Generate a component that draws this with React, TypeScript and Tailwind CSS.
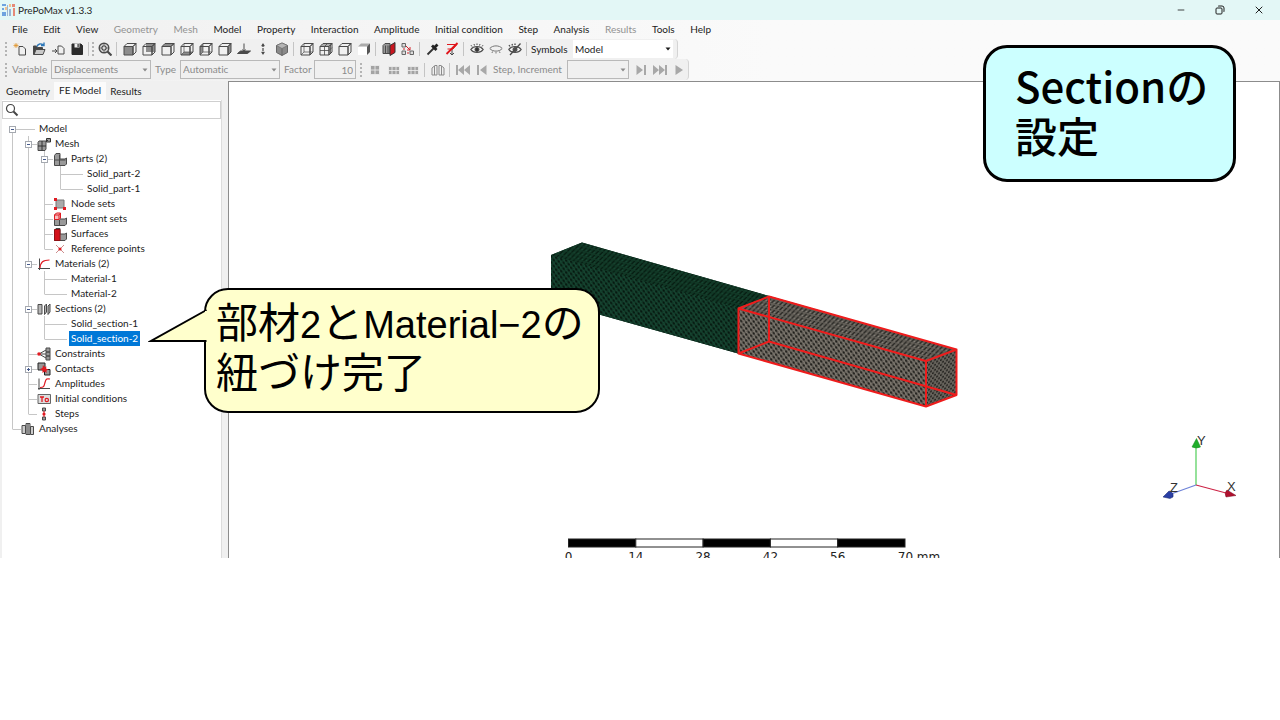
import React from 'react';
import { Minus, X } from 'lucide-react';

const menuItems = [
  { label: 'File' },
  { label: 'Edit' },
  { label: 'View' },
  { label: 'Geometry', disabled: true },
  { label: 'Mesh', disabled: true },
  { label: 'Model' },
  { label: 'Property' },
  { label: 'Interaction' },
  { label: 'Amplitude' },
  { label: 'Initial condition' },
  { label: 'Step' },
  { label: 'Analysis' },
  { label: 'Results', disabled: true },
  { label: 'Tools' },
  { label: 'Help' },
];

interface IconProps {
  children: React.ReactNode;
}

const Icon = ({ children }: IconProps) => (
  <svg
    viewBox="0 0 14 14"
    className="h-3.5 w-3.5 shrink-0"
    fill="none"
    stroke="#4a4a4a"
    strokeWidth="1"
    aria-hidden="true"
  >
    {children}
  </svg>
);

const FRONT = 'M1 4.5h9v8.5h-9z';
const BACK = 'M4 1.5h9v8.5h-9z';
const TOP = 'M1 4.5l3-3h9l-3 3z';
const BOTTOM = 'M1 13l3-3h9l-3 3z';
const LEFT = 'M1 4.5l3-3v8.5l-3 3z';
const RIGHT = 'M10 4.5l3-3v8.5l-3 3z';

const CubeIcon = ({ face, inner }: { face?: string; inner?: boolean }) => (
  <Icon>
    {face && <path d={face} fill="#8c8c8c" stroke="none" />}
    <path d={FRONT} />
    <path d={TOP} />
    <path d={RIGHT} />
    {inner && <path d="M4 1.5v8.5h9M4 10l-3 3" strokeWidth="0.7" />}
  </Icon>
);

const toolbarGroups: { name: string; icon: React.ReactNode }[][] = [
  [
    {
      name: 'Zoom to fit',
      icon: (
        <Icon>
          <circle cx="6" cy="6" r="4.8" fill="#d8d8d8" strokeWidth="1.4" />
          <path d="M9.5 9.5l4 4" strokeWidth="2.2" />
          <path
            d="M6 2.500v2M6 7.500v2M2.500 6h2M7.500 6h2M4 4l1 1M8 4L7 5M4 8l1-1M8 8L7 7"
            strokeWidth="1.300"
          />
        </Icon>
      ),
    },
  ],
  [
    { name: 'Front view', icon: <CubeIcon face={FRONT} /> },
    { name: 'Back view', icon: <CubeIcon face={BACK} /> },
    { name: 'Top view', icon: <CubeIcon face={TOP} /> },
    { name: 'Bottom view', icon: <CubeIcon face={BOTTOM} inner /> },
    { name: 'Left view', icon: <CubeIcon face={LEFT} inner /> },
    { name: 'Right view', icon: <CubeIcon face={RIGHT} /> },
    {
      name: 'Normal view',
      icon: (
        <Icon>
          <path d="M0.500 11.500l3-2.500h10l-3 2.500z" fill="#4a4a4a" />
          <path d="M7 1.500v8M5.500 7.500L7 9.500l1.500-2" />
        </Icon>
      ),
    },
    {
      name: 'Vertical view',
      icon: (
        <Icon>
          <path d="M7 2v10" strokeWidth="1.200" strokeDasharray="3 1" />
          <path d="M5.500 4L7 1.500 8.500 4zM5.500 10L7 12.500 8.500 10z" fill="#4a4a4a" strokeWidth="0.500" />
        </Icon>
      ),
    },
    {
      name: 'Isometric view',
      icon: (
        <Icon>
          <path d="M7 1l5.500 2.500v7L7 13.500l-5.500-3v-7z" fill="#8a8a8a" stroke="#666" />
          <path d="M1.500 3.500L7 1l5.500 2.500L7 6.500z" fill="#b5b5b5" stroke="#666" strokeWidth="0.600" />
          <path d="M7 6.500v7" stroke="#666" />
        </Icon>
      ),
    },
  ],
  [
    { name: 'Wireframe', icon: <CubeIcon inner /> },
    {
      name: 'Element edges',
      icon: (
        <Icon>
          <path d={FRONT} />
          <path d={TOP} />
          <path d={RIGHT} />
          <path d="M5.500 4.500V13M1 8.500h9M5.500 4.500l3-3M10 8.500l3-3M2.500 3h9M11.500 3v8.500" strokeWidth="0.800" />
        </Icon>
      ),
    },
    { name: 'Model edges', icon: <CubeIcon /> },
    {
      name: 'No edges',
      icon: (
        <Icon>
          <path d={FRONT} fill="#fff" stroke="none" />
          <path d={TOP} fill="#aaa" stroke="none" />
          <path d={RIGHT} fill="#555" stroke="none" />
        </Icon>
      ),
    },
  ],
  [
    {
      name: 'Section view',
      icon: (
        <Icon>
          <path d="M1 3.500l2-2h5v10H1z" fill="#999" />
          <path d="M3.500 3.500v8M6 3.500v8" />
          <path d="M8 3.500l5-3v10l-5 3z" fill="#c9151e" stroke="#333" />
        </Icon>
      ),
    },
    {
      name: 'Exploded view',
      icon: (
        <Icon>
          <path d="M1 1.500h3.500v3.500H1zM1 9h3.500v3.500H1zM9 9h3.500v3.500H9z" fill="#ddd" stroke="#666" />
          <path d="M5 4l4 4M3 6v2M6 11h2M9 5v3H6" stroke="#d0222a" />
        </Icon>
      ),
    },
  ],
  [
    {
      name: 'Query',
      icon: (
        <Icon>
          <path d="M1.500 12.500l6.500-6.500" strokeWidth="1.800" stroke="#333" />
          <path d="M6 3.500L10.500 8M8.500 5.500l3-3" strokeWidth="2.800" stroke="#222" />
        </Icon>
      ),
    },
    {
      name: 'Remove annotations',
      icon: (
        <Icon>
          <path d="M7 7v6M5 11l2 2 2-2" />
          <path d="M2 2.500h10L8 7H2.500" stroke="#e0161c" />
          <path d="M1.500 12L12.500 1" stroke="#e0161c" strokeWidth="1.800" />
        </Icon>
      ),
    },
  ],
  [
    {
      name: 'Show',
      icon: (
        <Icon>
          <path d="M0.800 7.500C3.500 3.500 10.500 3.500 13.200 7.500 10.500 11.500 3.500 11.500 0.800 7.500z" strokeWidth="1.200" />
          <circle cx="7" cy="7.500" r="2" fill="#333" />
          <path d="M2 4.500L1 3.200M4.500 3.500L4 2M7 3V1.500M9.500 3.500l.5-1.500M12 4.500l1-1.300" />
        </Icon>
      ),
    },
    {
      name: 'Hide',
      icon: (
        <Icon>
          <path
            d="M0.800 6.500C3.500 3 10.500 3 13.200 6.500 10.500 10 3.500 10 0.800 6.500zM3.500 9.500L3 11M7 10v1.500M10.500 9.500l.5 1.500"
            stroke="#777"
          />
        </Icon>
      ),
    },
    {
      name: 'Invert visibility',
      icon: (
        <Icon>
          <path d="M0.800 7.500C3.500 3.500 10.500 3.500 13.200 7.500 10.500 11.500 3.500 11.500 0.800 7.500z" strokeWidth="1.200" />
          <circle cx="7" cy="7.500" r="2" fill="#555" />
          <path d="M2 13L12.500 1.500M2 4.500L1 3M4.500 3.500L4 2M7 3V1.500" strokeWidth="1.300" />
        </Icon>
      ),
    },
  ],
];

const fileButtons = [
  {
    name: 'New',
    icon: (
      <Icon>
        <path d="M6 4.500h4l2.500 2.500v6H6z" />
        <path d="M3 1v5M.5 3.500h5M1.200 1.700l3.600 3.600M4.800 1.700L1.200 5.300" stroke="#e0962e" strokeWidth="0.800" />
      </Icon>
    ),
  },
  {
    name: 'Open',
    icon: (
      <Icon>
        <path d="M1.500 12.500V4h3l1 1.500h5v7z" fill="#444" />
        <path d="M2 12.500l2-5h9l-2 5z" fill="#c9c9c9" />
        <path d="M5 4.500C6 1.500 9 1.200 11.500 3M12 .5v3H9" stroke="#2d77b8" strokeWidth="1.400" />
      </Icon>
    ),
  },
  {
    name: 'Import',
    icon: (
      <Icon>
        <path d="M7 4h3.500L13 6.500V12H7zM1 9h5M4 7l2 2-2 2" />
      </Icon>
    ),
  },
  {
    name: 'Save',
    icon: (
      <Icon>
        <path d="M2 2h9l1.500 1.500v9H2z" fill="#2b2b2b" stroke="#2b2b2b" />
        <path d="M4.500 1.500h5v4h-5z" fill="#f0f0f0" stroke="none" />
        <path d="M7.500 2h1.200v3H7.500z" fill="#2b2b2b" stroke="none" />
      </Icon>
    ),
  },
];

const ToolButton = ({ name, children }: { name: string; children: React.ReactNode }) => (
  <button type="button" aria-label={name} className="flex h-5 w-[19px] shrink-0 items-center justify-center">
    {children}
  </button>
);

const Separator = () => <span className="ml-0.5 mr-[3px] h-3.5 w-px shrink-0 bg-[#c4c4c4]" />;

const Grip = () => <span className="h-3.5 w-0 shrink-0 border-l-2 border-dotted border-[#b4b4b4]" />;

const TitleBar = () => (
  <header className="flex h-5 items-center bg-[#e3f7f6] pl-0.5 text-[#1f1f1f]">
    <svg viewBox="0 0 14 14" className="mr-0.5 h-3.5 w-3.5" aria-hidden="true">
      <path d="M0 1h4v2H0zM0 5h2v2H0zM0 9h4v4H0z" fill="#6fa3df" />
      <path d="M5 2h1v11H5zM7 6h2v7H7z" fill="#9ab4d4" />
      <path d="M10 1h3v3h-3zM11 5h2v8h-2z" fill="#e58a78" />
      <path d="M7 1h2v3H7zM3 4h2v3H3z" fill="#f1c08f" />
    </svg>
    <h1 className="flex-1">PrePoMax v1.3.3</h1>
    <div className="flex items-center pr-0.5">
      <button type="button" aria-label="Minimize" className="flex w-[39px] justify-center">
        <Minus className="h-2.5 w-2.5" />
      </button>
      <button type="button" aria-label="Restore" className="flex w-[39px] justify-center">
        <svg viewBox="0 0 10 10" className="h-2.5 w-2.5" fill="none" stroke="#1f1f1f" aria-hidden="true">
          <rect x="1" y="3" width="6" height="6" rx="1" />
          <path d="M3 1.500q.3-.5 1-.5h3q2 0 2 2v3q0 .7-.5 1" />
        </svg>
      </button>
      <button type="button" aria-label="Close" className="flex w-[39px] justify-center">
        <X className="h-3 w-3" strokeWidth={2} />
      </button>
    </div>
  </header>
);

const MenuBar = () => (
  <nav className="flex h-[19px] w-[711px] items-center justify-between pl-3">
    {menuItems.map((item) => (
      <button
        key={item.label}
        type="button"
        disabled={item.disabled}
        className="whitespace-nowrap text-[#1c1c1c] disabled:text-[#929292]"
      >
        {item.label}
      </button>
    ))}
  </nav>
);

const Arrow = () => (
  <svg viewBox="0 0 6 4" className="pointer-events-none -ml-2 h-1 w-1.5 shrink-0" aria-hidden="true">
    <path d="M0.500 0.500h5L3 3.500z" fill="currentColor" />
  </svg>
);

const MainToolbar = () => (
  <div className="flex h-5 w-max items-center rounded-r border-r border-[#d4d4d4] bg-[#f0f0f0] pl-[5px] pr-1">
    <Grip />
    <div className="ml-[3px] flex">
      {fileButtons.map((b) => (
        <ToolButton key={b.name} name={b.name}>
          {b.icon}
        </ToolButton>
      ))}
    </div>
    <Separator />
    <Grip />
    <span className="w-px" />
    {toolbarGroups.map((group, i) => (
      <React.Fragment key={i}>
        {i > 0 && <Separator />}
        {group.map((b) => (
          <ToolButton key={b.name} name={b.name}>
            {b.icon}
          </ToolButton>
        ))}
      </React.Fragment>
    ))}
    <Separator />
    <label htmlFor="symbols" className="ml-px w-[42px]">
      Symbols
    </label>
    <div className="flex w-[100px] items-center bg-white">
      <select id="symbols" className="h-[18px] w-full appearance-none pl-0.5">
        <option>Model</option>
      </select>
      <Arrow />
    </div>
  </div>
);

const resultButtons = [
  { name: 'Undeformed', d: 'M2.500 2.500h9v9h-9zM7 2.500v9M2.500 7h9' },
  { name: 'Deformed', d: 'M1.500 3.500h11v8h-11zM5 4v7.500M9 4v7.500M1.500 7.500h11' },
  { name: 'Color contours', d: 'M1.500 3.500h11v8h-11zM5 4v7.500M9 4v7.500M1.500 7.500h11' },
];

const ResultsToolbar = () => (
  <div className="flex h-[21px] w-max items-center rounded-r border-r border-[#d4d4d4] bg-[#f0f0f0] pl-[5px] text-[#8b8b8b]">
    <Grip />
    <label htmlFor="variable" className="ml-[5px] w-[39px]">
      Variable
    </label>
    <div className="flex w-[100px] items-center border border-[#b9b9b9]">
      <select id="variable" disabled className="h-[17px] w-full appearance-none pl-0.5">
        <option>Displacements</option>
      </select>
      <Arrow />
    </div>
    <label htmlFor="type" className="ml-1 w-[25px]">
      Type
    </label>
    <div className="flex w-[100px] items-center border border-[#b9b9b9]">
      <select id="type" disabled className="h-[17px] w-full appearance-none pl-0.5">
        <option>Automatic</option>
      </select>
      <Arrow />
    </div>
    <label htmlFor="factor" className="ml-1 w-[30px]">
      Factor
    </label>
    <input
      id="factor"
      disabled
      defaultValue="10"
      className="mr-1 h-[19px] w-[42px] border border-[#b9b9b9] pr-0.5 text-right"
    />
    <Grip />
    <div className="ml-[3px] flex">
      {resultButtons.map((b) => (
        <ToolButton key={b.name} name={b.name}>
          <Icon>
            <path d={b.d} stroke="#f0f0f0" fill="#a3a3a3" strokeWidth="0.800" />
          </Icon>
        </ToolButton>
      ))}
    </div>
    <Separator />
    <ToolButton name="Transformation">
      <Icon>
        <path d="M1 5l3-2.500h2V12H1zM13 5l-3-2.500H8V12h5zM3.500 3v9M10.500 3v9" stroke="#8b8b8b" />
      </Icon>
    </ToolButton>
    <Separator />
    <ToolButton name="First increment">
      <Icon>
        <path d="M0 2h2v10H0zM8 2v10L2 7zM14 2v10L8 7z" fill="#a8a8a8" stroke="none" />
      </Icon>
    </ToolButton>
    <ToolButton name="Previous increment">
      <Icon>
        <path d="M2 2h2v10H2zM11.500 2v10L5 7z" fill="#a8a8a8" stroke="none" />
      </Icon>
    </ToolButton>
    <label htmlFor="step" className="ml-0.5 w-[74px] whitespace-nowrap">
      Step, Increment
    </label>
    <div className="mr-0.5 flex w-[62px] items-center border border-[#b9b9b9]">
      <select id="step" disabled className="h-[17px] w-full appearance-none">
        <option></option>
      </select>
      <Arrow />
    </div>
    <ToolButton name="Next increment">
      <Icon>
        <path d="M10 2h2v10h-2zM2.500 2v10L9 7z" fill="#a8a8a8" stroke="none" />
      </Icon>
    </ToolButton>
    <ToolButton name="Last increment">
      <Icon>
        <path d="M12 2h2v10h-2zM0 2v10l6-5zM6 2v10l6-5z" fill="#a8a8a8" stroke="none" />
      </Icon>
    </ToolButton>
    <ToolButton name="Animate">
      <Icon>
        <path d="M3.500 2v10L11 7z" fill="#a8a8a8" stroke="none" />
      </Icon>
    </ToolButton>
  </div>
);

const BLOCKS = 'M1.500 3.500l1.500-2h4v5.500h5l1.500-1v6l-1.500 1.500h-10.500z';

const treeIcons: Record<string, React.ReactNode> = {
  mesh: (
    <Icon>
      <path d="M1 5.500l1-1.500h7v8l-1 1.500H1z" fill="#999" />
      <path d="M1 9h8M5 4v9.500M9 4l1-1 1 1M9.500 1.500h4v3.500h-4z" fill="#999" stroke="#333" />
    </Icon>
  ),
  parts: (
    <Icon>
      <path d={BLOCKS} fill="#999" />
      <path d="M1.500 8h11M6.500 3v10.500" />
    </Icon>
  ),
  nodes: (
    <Icon>
      <path d="M3 3h8v8H3z" fill="#aaa" stroke="#777" />
      <path d="M1 1h3v3H1zM10 10h3v3h-3zM1 10h3v3H1z" fill="#e01b22" stroke="none" />
    </Icon>
  ),
  elements: (
    <Icon>
      <path d={BLOCKS} fill="#999" />
      <path d="M1.500 3l2-2h4v5l-1.500 1.500H1.500zM1.500 3H6v4.500M6 3l1.500-2" fill="#f6bcbc" stroke="#e01b22" />
      <path d="M6.500 8v5.500" />
    </Icon>
  ),
  surfaces: (
    <Icon>
      <path d={BLOCKS} fill="#999" />
      <path d="M1.500 2.500H7v11H1.500z" fill="#d3121a" stroke="#8f1014" />
    </Icon>
  ),
  points: (
    <Icon>
      <path d="M3 3l8 8M11 3l-8 8" stroke="#c07070" strokeWidth="0.800" />
      <circle cx="7" cy="7" r="1.600" fill="#e01b22" stroke="none" />
    </Icon>
  ),
  materials: (
    <Icon>
      <path d="M2.500 1.500V13M1 11.500h12" />
      <path d="M3 11c.5-6 3-8 9.500-8" stroke="#e01b22" strokeWidth="1.200" />
    </Icon>
  ),
  sections: (
    <Icon>
      <path d="M1 2.500h4V12H1zM7.500 4L9.500 2v8l-2 2.500zM11 4l2-2v8l-2 2.500z" fill="#b5b5b5" />
    </Icon>
  ),
  constraints: (
    <Icon>
      <path d="M9 1h4v4H9zM9 5h4v4H9zM9 9h4v4H9z" fill="#999" />
      <path d="M2 7l7-4M2 7h7M2 7l7 4" stroke="#444" />
      <circle cx="2" cy="7" r="1.800" fill="#e01b22" stroke="none" />
    </Icon>
  ),
  contacts: (
    <Icon>
      <path d="M1 1h7v7H1zM7.500 7.500H13V13H7.500z" fill="#999" stroke="#222" />
      <path d="M6 3l1.500 2 2-.5-.5 2 2.500 1-2.200 1.200.5 2.300-2.300-1.500L5.500 11V8.500L3 7l2.500-1z" fill="#e01b22" stroke="none" />
    </Icon>
  ),
  amplitudes: (
    <Icon>
      <path d="M2 1.500V13M1 11.500h12" />
      <path d="M3 10.500c4 0 4-1 5-5s2-4 5-3.500" stroke="#e01b22" strokeWidth="1.200" />
    </Icon>
  ),
  initial: (
    <Icon>
      <path d="M1 2.500h12.500v9H1z" fill="#ddd" stroke="#666" />
      <path d="M3 5h4M5 5v5" stroke="#e01b22" strokeWidth="1.300" />
      <circle cx="9.800" cy="8" r="1.700" stroke="#e01b22" strokeWidth="1.200" />
    </Icon>
  ),
  steps: (
    <Icon>
      <path d="M5.500 1h3v3h-3zM5.500 10h3v3h-3z" fill="#999" />
      <path d="M7 4v6" stroke="#e01b22" />
      <circle cx="7" cy="7" r="1.600" fill="#e01b22" stroke="none" />
    </Icon>
  ),
  analyses: (
    <Icon>
      <path d="M1 3.500h3.500v8H1zM5 1.500h4v11H5zM9.500 4.500h3v8h-3z" fill="#ccc" />
      <path d="M7 1.500v11" />
    </Icon>
  ),
};

// guides: one letter per indent column
// v = line, t = tee, l = last child, r = root, m = open node, p = closed node
const treeRows: { guides: string; label: string; icon?: string; selected?: boolean }[] = [
  { guides: 'r', label: 'Model' },
  { guides: 'vm', label: 'Mesh', icon: 'mesh' },
  { guides: 'vvm', label: 'Parts (2)', icon: 'parts' },
  { guides: 'vvvt', label: 'Solid_part-2' },
  { guides: 'vvvl', label: 'Solid_part-1' },
  { guides: 'vvt', label: 'Node sets', icon: 'nodes' },
  { guides: 'vvt', label: 'Element sets', icon: 'elements' },
  { guides: 'vvt', label: 'Surfaces', icon: 'surfaces' },
  { guides: 'vvl', label: 'Reference points', icon: 'points' },
  { guides: 'vm', label: 'Materials (2)', icon: 'materials' },
  { guides: 'vvt', label: 'Material-1' },
  { guides: 'vvl', label: 'Material-2' },
  { guides: 'vm', label: 'Sections (2)', icon: 'sections' },
  { guides: 'vvt', label: 'Solid_section-1' },
  { guides: 'vvl', label: 'Solid_section-2', selected: true },
  { guides: 'vt', label: 'Constraints', icon: 'constraints' },
  { guides: 'vp', label: 'Contacts', icon: 'contacts' },
  { guides: 'vt', label: 'Amplitudes', icon: 'amplitudes' },
  { guides: 'vt', label: 'Initial conditions', icon: 'initial' },
  { guides: 'vl', label: 'Steps', icon: 'steps' },
  { guides: 'l', label: 'Analyses', icon: 'analyses' },
];

const Guide = ({ kind }: { kind: string }) => {
  const expandable = kind === 'r' || kind === 'm' || kind === 'p';
  return (
    <svg viewBox="0 0 16 15" className="h-[15px] w-4 shrink-0" fill="none" stroke="#c6c6c6" aria-hidden="true">
      {kind === 'r' && <path d="M7.500 7v8" />}
      {kind === 'l' && <path d="M7.500 0v8" />}
      {kind !== 'r' && kind !== 'l' && <path d="M7.500 0v15" />}
      {kind !== 'v' && <path d="M7.500 8.500H16" />}
      {expandable && <rect x="4.500" y="5.500" width="6" height="6" fill="#fff" stroke="#a5a9b0" />}
      {expandable && <path d="M6 8.500h3" stroke="#44598c" />}
      {kind === 'p' && <path d="M7.500 7v3" stroke="#44598c" />}
    </svg>
  );
};

const ModelTree = () => (
  <ul className="flex-1 bg-white pb-28 pl-[3px] pt-0.5">
    {treeRows.map((row) => (
      <li key={row.label} className="flex h-[15px] items-center">
        {row.guides.split('').map((kind, i) => (
          <Guide key={i} kind={kind} />
        ))}
        <span className="flex w-4 shrink-0 items-center">
          {row.icon ? treeIcons[row.icon] : <span className="mt-0.5 h-px w-3.5 bg-[#c6c6c6]" />}
        </span>
        <span
          className={
            row.selected
              ? 'whitespace-nowrap bg-[#0078d7] px-0.5 leading-[15px] text-white'
              : 'whitespace-nowrap px-0.5 leading-[15px]'
          }
        >
          {row.label}
        </span>
      </li>
    ))}
  </ul>
);

const Sidebar = () => (
  <aside className="flex w-[228px] shrink-0 flex-col bg-[#f0f0f0] pl-0.5 pr-1.5">
    <div role="tablist" className="flex h-[19px] items-end">
      <button type="button" role="tab" aria-selected="false" className="w-[52px] text-center leading-[17px]">
        Geometry
      </button>
      <button type="button" role="tab" aria-selected="true" className="h-[18px] w-[52px] bg-[#fbfbfb] pb-0.5 text-center leading-4">
        FE Model
      </button>
      <button type="button" role="tab" aria-selected="false" className="w-10 text-center leading-[17px]">
        Results
      </button>
    </div>
    <div className="flex flex-1 flex-col border-r border-[#dcdcdc] bg-white pt-px">
      <label className="flex h-[18px] items-center border border-[#cfcfcf] pl-0.5">
        <svg viewBox="0 0 14 14" className="h-3.5 w-3.5 shrink-0" fill="none" stroke="#444" aria-hidden="true">
          <circle cx="5.500" cy="5.500" r="4" strokeWidth="1.200" />
          <path d="M8.500 8.500l4 4" strokeWidth="2" />
        </svg>
        <input type="search" aria-label="Search" className="w-full min-w-0 outline-none" />
      </label>
      <ModelTree />
    </div>
  </aside>
);

const scaleSegments = [0, 1, 2, 3, 4];
const scaleLabels = ['0', '14', '28', '42', '56'];

const Viewport = () => (
  <main className="min-w-0 flex-1 border-l border-r border-t border-[#8c8c8c] bg-white">
    <svg viewBox="229 82 1050 476" className="block w-full" role="img" aria-label="Meshed beam with two parts">
      <defs>
        <pattern id="greenSide" width="5" height="6" patternUnits="userSpaceOnUse" patternTransform="skewY(15.500)">
          <rect width="5" height="6" fill="#164531" />
          <path d="M0 0l5 6M5 0L0 6" stroke="#0d3423" strokeWidth="0.600" />
          <circle cx="1.200" cy="1.500" r="1.200" fill="#06160e" />
          <circle cx="3.700" cy="4.500" r="1.200" fill="#06160e" />
        </pattern>
        <pattern id="greenTop" width="4" height="5" patternUnits="userSpaceOnUse" patternTransform="skewY(15.500) skewX(-38)">
          <rect width="4" height="5" fill="#113826" />
          <path d="M1 0v4" stroke="#071d12" strokeWidth="1.400" />
          <circle cx="3" cy="3" r="0.600" fill="#1a5039" />
        </pattern>
        <pattern id="graySide" width="5" height="6" patternUnits="userSpaceOnUse" patternTransform="skewY(15.500)">
          <rect width="5" height="6" fill="#7d786f" />
          <path d="M0 0l5 6M5 0L0 6" stroke="#5a564f" strokeWidth="0.600" />
          <circle cx="1.200" cy="1.500" r="1.200" fill="#1c1b18" />
          <circle cx="3.700" cy="4.500" r="1.200" fill="#1c1b18" />
        </pattern>
        <pattern id="grayTop" width="4" height="5" patternUnits="userSpaceOnUse" patternTransform="skewY(15.500) skewX(-38)">
          <rect width="4" height="5" fill="#625e57" />
          <path d="M1 0v4" stroke="#2b2a27" strokeWidth="1.500" />
          <circle cx="3" cy="3" r="0.600" fill="#97928a" />
        </pattern>
        <pattern id="grayEnd" width="4" height="5" patternUnits="userSpaceOnUse" patternTransform="skewY(-21)">
          <rect width="4" height="5" fill="#68645d" />
          <circle cx="1" cy="1.200" r="1" fill="#1c1b18" />
          <circle cx="3" cy="3.700" r="1" fill="#1c1b18" />
        </pattern>
      </defs>

      <path d="M551 255l31-12.500L769 296l-31 57.500L551 301z" fill="#123a28" />
      <path d="M551 255L738 308v45.500L551 301z" fill="url(#greenSide)" />
      <path d="M551 255l31-12.500L769 296l-31 12z" fill="url(#greenTop)" />
      <path d="M738 308l31-12 187.500 53.500V395L926 406.500l-188-53z" fill="#5a564f" />
      <path d="M738 308l188 53v45.500l-188-53z" fill="url(#graySide)" />
      <path d="M738 308l31-12 187.500 53.500L926 361z" fill="url(#grayTop)" />
      <path d="M926 361l30.500-11.500V395L926 406.500z" fill="url(#grayEnd)" />
      <path
        d="M738.500 308.500L769 296.500l187.500 53L926 361zv45l187.500 53V361M956.500 349.500V395L926 406.500M769 296.500v45L738.500 353.500M769 341.500L956.500 395"
        fill="none"
        stroke="#ee1c1c"
        strokeWidth="2"
        strokeLinejoin="round"
      />

      {scaleSegments.map((i) => (
        <rect
          key={i}
          x={568.5 + i * 67.3}
          y="539"
          width="67.3"
          height="8"
          fill={i % 2 === 0 ? '#000' : '#fff'}
          stroke="#222"
        />
      ))}
      <g fontFamily="DejaVu Sans, sans-serif" fontSize="12" fill="#222" textAnchor="middle">
        {scaleLabels.map((label, i) => (
          <text key={label} x={568.5 + i * 67.3} y="561">
            {label}
          </text>
        ))}
        <text x="919" y="561">
          70 mm
        </text>
      </g>

      <path d="M1196 485v-38" stroke="#4fce58" strokeWidth="1.200" />
      <path d="M1196 485l30 8" stroke="#cc2144" strokeWidth="1.200" />
      <path d="M1196 485l-25 9" stroke="#6d82d8" strokeWidth="1.200" />
      <path d="M1196.500 438.500l4 8.500q-4 2-8.500 0z" fill="#1fae2a" stroke="#148a1e" strokeWidth="0.500" />
      <path d="M1236 495.500l-10 1.500q-2-4 1-7z" fill="#b0102e" stroke="#7e0a20" strokeWidth="0.500" />
      <path d="M1163 497l6-6q5 1 4 6l-3 1.500z" fill="#2a3fa5" stroke="#17246b" strokeWidth="0.500" />
      <g fontFamily="Liberation Sans, sans-serif" fontSize="13" fill="#333">
        <text x="1197" y="445">Y</text>
        <text x="1227" y="491">X</text>
        <text x="1170" y="492">Z</text>
      </g>
    </svg>
  </main>
);

const SectionCallout = () => (
  <div className="absolute left-[204px] top-[288px] h-[125px] w-[396px] rounded-3xl border-2 border-black bg-[#ffffcc] py-[5px] pl-2.5 font-['Noto_Sans_CJK_JP',sans-serif] text-[42px] leading-[50px] text-black">
    <svg viewBox="0 0 60 36" className="absolute -left-[58px] top-[18px] h-9 w-[60px]" aria-hidden="true">
      <path d="M58.500 2L3 33h55.500" fill="#ffffcc" stroke="#000" strokeWidth="2" />
      <path d="M57 3h3v29h-3z" fill="#ffffcc" />
    </svg>
    <p className="h-[50px] whitespace-nowrap">
      部材<span className="font-['Liberation_Sans',sans-serif] text-[38px] leading-none">2</span>と
      <span className="font-['Liberation_Sans',sans-serif] text-[38px] leading-none">Material−2</span>の
    </p>
    <p className="h-[50px]">紐づけ完了</p>
  </div>
);

const TitleCallout = () => (
  <div className="absolute right-11 top-[45px] h-[137px] w-[253px] rounded-3xl border-3 border-black bg-[#ccffff] pl-[29px] pt-3 font-['Noto_Sans_CJK_JP',sans-serif] text-[42px] font-medium leading-[50px] text-black">
    <p className="whitespace-nowrap">Sectionの</p>
    <p>設定</p>
  </div>
);

export default function App() {
  return (
    <div className="relative min-h-screen overflow-hidden bg-white font-['Lato','Open_Sans',sans-serif] text-[10px] text-[#1c1c1c] [font-variant-ligatures:none]">
      <TitleBar />
      <div className="bg-linear-to-r from-[#f0f0f0] to-[#fafafa] to-60% pb-px">
        <MenuBar />
        <MainToolbar />
        <ResultsToolbar />
      </div>
      <div className="flex">
        <Sidebar />
        <Viewport />
      </div>
      <SectionCallout />
      <TitleCallout />
    </div>
  );
}
